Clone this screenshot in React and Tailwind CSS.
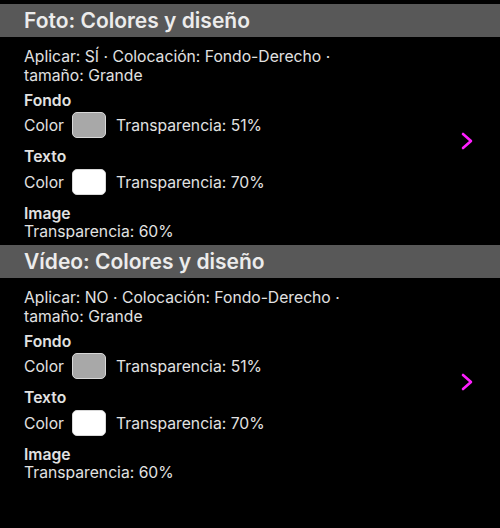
import React from 'react';

const sections = [
  { title: 'Foto: Colores y diseño', aplicar: 'SÍ' },
  { title: 'Vídeo: Colores y diseño', aplicar: 'NO' },
];

function Swatch({ color }) {
  return (
    <div
      className={`w-[34px] h-[26px] rounded-[5px] border-[1.5px] border-[#d8d8d8] ${color}`}
    />
  );
}

function ColorRow({ color, value }) {
  return (
    <div className="flex items-center h-[26px]">
      <span className="w-[48px]">Color</span>
      <Swatch color={color} />
      <span className="ml-[10px]">Transparencia: {value}</span>
    </div>
  );
}

function Section({ title, aplicar }) {
  return (
    <div>
      {/* Header */}
      <div className="h-[33px] bg-[#585858] flex items-center px-6">
        <h2 className="text-[21px] font-semibold text-[#ececec] leading-none">{title}</h2>
      </div>

      {/* Body */}
      <div className="h-[208px] flex items-center">
        <div className="flex-1 self-start h-[202px] overflow-hidden pl-6 pt-[10px] text-[15.7px] leading-[19px] text-[#e2e2e2]">
          <p>Aplicar: {aplicar} · Colocación: Fondo-Derecho ·</p>
          <p>tamaño: Grande</p>
          <p className="mt-[6px] font-semibold">Fondo</p>
          <div className="mt-[2px]">
            <ColorRow color="bg-[#a8a8a8]" value="51%" />
          </div>
          <p className="mt-[9px] font-semibold">Texto</p>
          <div className="mt-[3px]">
            <ColorRow color="bg-white" value="70%" />
          </div>
          <p className="mt-[9px] font-semibold">Image</p>
          <p className="-mt-[1px]">Transparencia: 60%</p>
        </div>
        <div className="w-[56px] flex justify-start pl-[16px]">
          <svg width="14" height="20" viewBox="0 0 14 20" fill="none">
            <polyline
              points="3,3 11,10 3,17"
              stroke="#ff1fff"
              strokeWidth="2.6"
              strokeLinecap="round"
              strokeLinejoin="round"
            />
          </svg>
        </div>
      </div>
    </div>
  );
}

export default function App() {
  return (
    <div
      className="w-[500px] h-[528px] bg-black overflow-hidden pt-[4px]"
      style={{ fontFamily: 'Inter, "Noto Sans", sans-serif' }}
    >
      {sections.map((s) => (
        <Section key={s.title} {...s} />
      ))}
    </div>
  );
}
